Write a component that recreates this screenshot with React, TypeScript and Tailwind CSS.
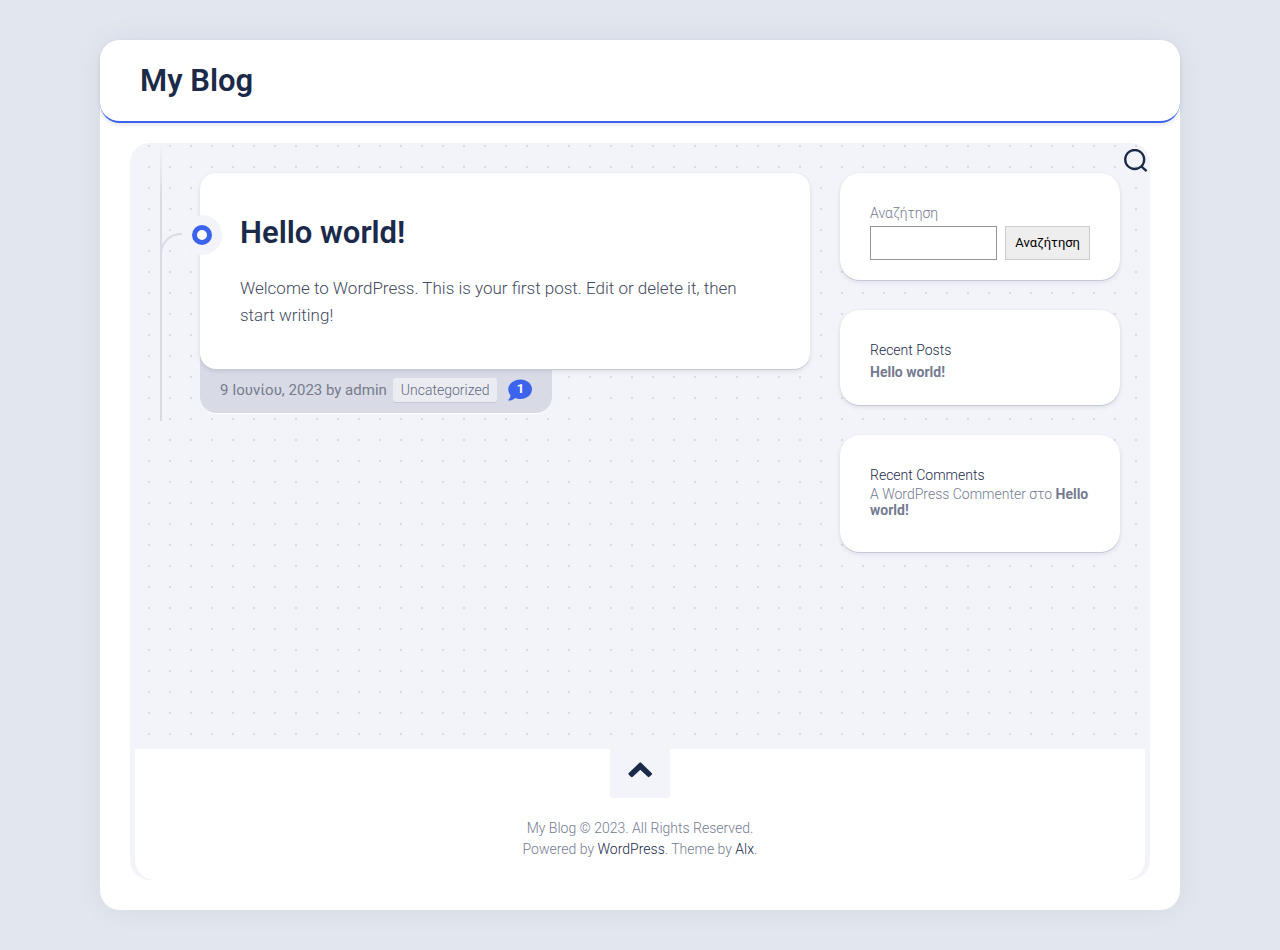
import type { ReactNode } from "react";

const card = "bg-white shadow-[0_0_2px_rgba(0,0,50,0.03),0_1px_0_#c8ccd8,0_2px_5px_rgba(0,0,80,0.1)]";

function Widget({ className = "", children }: { className?: string; children: ReactNode }) {
  return <section className={`rounded-[20px] px-[30px] ${card} ${className}`}>{children}</section>;
}

function Post() {
  return (
    <article className="relative min-w-0 flex-1">
      <div className={`relative z-10 rounded-2xl px-10 pt-10 pb-10 ${card}`}>
        <h2 className="text-[31px] leading-10 font-semibold text-[#1b2a49]">
          <a href="#post">Hello world!</a>
        </h2>
        <p className="mt-[22px] text-[17px] leading-[27px] font-light text-[#444b5e]">
          Welcome to WordPress. This is your first post. Edit or delete it, then start writing!
        </p>
      </div>
      <div className="-mt-4 flex w-fit items-center rounded-b-2xl bg-[#d8dae6] px-5 pt-[25px] pb-[11px] text-[#777b8c] shadow-[0_1px_0_#fff]">
        <span className="text-[15px] leading-6">9 Ιουνίου, 2023 by admin</span>
        <a
          href="#uncategorized"
          className="ml-1.5 rounded-[3px] bg-[#ebecf2] px-2 text-[14px] leading-6 font-light text-[#5f6880] shadow-[0_1px_0_rgba(0,0,0,0.08)]"
        >
          Uncategorized
        </a>
        <a href="#comments" aria-label="1 comment" className="relative ml-[11px] flex h-[22px] w-6 justify-center text-[13px] leading-5 font-bold text-white">
          <svg viewBox="0 0 24 22" className="absolute inset-0 h-full w-full" fill="#3c63eb" aria-hidden="true">
            <path d="M12.500 0.500C18.800 0.500 24 4.800 24 10.200S18.800 20 12.500 20C10.600 20 8.700 19.600 7.200 18.900C5.500 20.500 3.100 21.600 0.600 21.600C0.100 21.600 0 21 0.400 20.700C1.700 19.500 2.500 18 2.500 16.200C1.100 14.500 0.300 12.400 0.300 10.200C0.300 4.800 6 0.500 12.500 0.500Z" />
          </svg>
          <span className="relative">1</span>
        </a>
      </div>
      <svg viewBox="0 0 64 280" className="absolute -top-[30px] -left-10 z-20 h-[280px] w-16" fill="none" aria-hidden="true">
        <defs>
          <linearGradient id="rail" x1="0" y1="0" x2="0" y2="1">
            <stop offset="0" stopColor="#d8dae6" stopOpacity="0" />
            <stop offset="0.2" stopColor="#d8dae6" />
          </linearGradient>
        </defs>
        <rect x="0" y="0" width="2" height="278" fill="url(#rail)" />
        <path d="M1 112C1 99 10 91 22 91" stroke="#d8dae6" strokeWidth="2" />
        <circle cx="42" cy="92" r="20" fill="#f3f4f9" />
        <circle cx="42" cy="92" r="7.500" fill="#fff" stroke="#3c63eb" strokeWidth="5" />
      </svg>
    </article>
  );
}

function Sidebar() {
  return (
    <aside className="flex w-[280px] shrink-0 flex-col gap-[30px] text-[14px] text-[#747b8f]">
      <Widget className="pt-[30px] pb-5">
        <form onSubmit={(e) => e.preventDefault()}>
          <label htmlFor="search" className="block leading-5 font-light">Αναζήτηση</label>
          <div className="mt-[3px] flex gap-2">
            <input id="search" type="search" className="h-[34px] min-w-0 flex-1 border border-[#949494] bg-white px-2" />
            <button className="h-[34px] border border-[#ccc] bg-[#eee] px-[9px] text-[13px] text-black">Αναζήτηση</button>
          </div>
        </form>
      </Widget>
      <Widget className="pt-[30px] pb-[21px]">
        <h2 className="leading-5 font-light text-[#1b2a49]">Recent Posts</h2>
        <ul className="leading-6">
          <li><a href="#post" className="font-bold">Hello world!</a></li>
        </ul>
      </Widget>
      <Widget className="pt-[30px] pb-[34px]">
        <h2 className="leading-[21px] font-light text-[#1b2a49]">Recent Comments</h2>
        <ol className="leading-4 font-light">
          <li>
            <a href="#commenter">A WordPress Commenter</a> στο{" "}
            <a href="#post" className="font-bold">Hello world!</a>
          </li>
        </ol>
      </Widget>
    </aside>
  );
}

export default function App() {
  return (
    <div className="min-h-screen bg-[#e2e6ed] px-[100px] py-10 font-[Roboto,'Noto_Sans',sans-serif]">
      <div className="rounded-[20px] bg-white shadow-[0_0_30px_rgba(0,0,80,0.06)]">
        <header className="rounded-[20px] border-b-2 border-[#3c63eb] bg-white px-10 pt-[21px] pb-5 shadow-[0_2px_4px_rgba(0,0,80,0.1)]">
          <h1 className="text-[31px] leading-10 font-semibold text-[#1b2a49]">
            <a href="#home">My Blog</a>
          </h1>
        </header>
        <div className="px-[30px] pt-5 pb-[30px]">
          <div className="relative rounded-[20px] bg-[#f3f4f9] bg-[radial-gradient(circle_at_19px_3px,#d8dae6_1px,transparent_1px)] bg-[size:21px_21px]">
            <button aria-label="Search" className="absolute top-1.5 right-0.5 text-[#1b2a49]">
              <svg viewBox="0 0 24 24" className="h-6 w-6" fill="none" stroke="currentColor" strokeWidth="2.300" aria-hidden="true">
                <circle cx="10.700" cy="10.500" r="9.500" />
                <path d="M17.300 17.300L22.600 22.200" />
              </svg>
            </button>
            <main className="flex min-h-[606px] items-start gap-[30px] pt-[30px] pr-[30px] pl-[70px]">
              <Post />
              <Sidebar />
            </main>
            <footer className="mx-[5px] flex flex-col items-center rounded-b-[20px] bg-white pb-5 text-center text-[14px] leading-[21px] font-light text-[#747b8f]">
              <a href="#top" aria-label="Back to top" className="mb-5 flex h-[49px] w-[60px] justify-center rounded-b-[3px] bg-[#f3f4f9] pt-[13px]">
                <svg viewBox="0 0 24 16" className="h-4 w-6" fill="#1b2a49" stroke="#1b2a49" strokeWidth="2.400" strokeLinejoin="round" aria-hidden="true">
                  <path d="M12.300 1.500L22.800 11.800L20.600 14L12.300 6.200L4 14L1.600 11.800Z" />
                </svg>
              </a>
              <p>My Blog © 2023. All Rights Reserved.</p>
              <p>
                Powered by <a href="#wordpress" className="text-[#1b2a49]">WordPress</a>. Theme by{" "}
                <a href="#alx" className="text-[#1b2a49]">Alx</a>.
              </p>
            </footer>
          </div>
        </div>
      </div>
    </div>
  );
}
